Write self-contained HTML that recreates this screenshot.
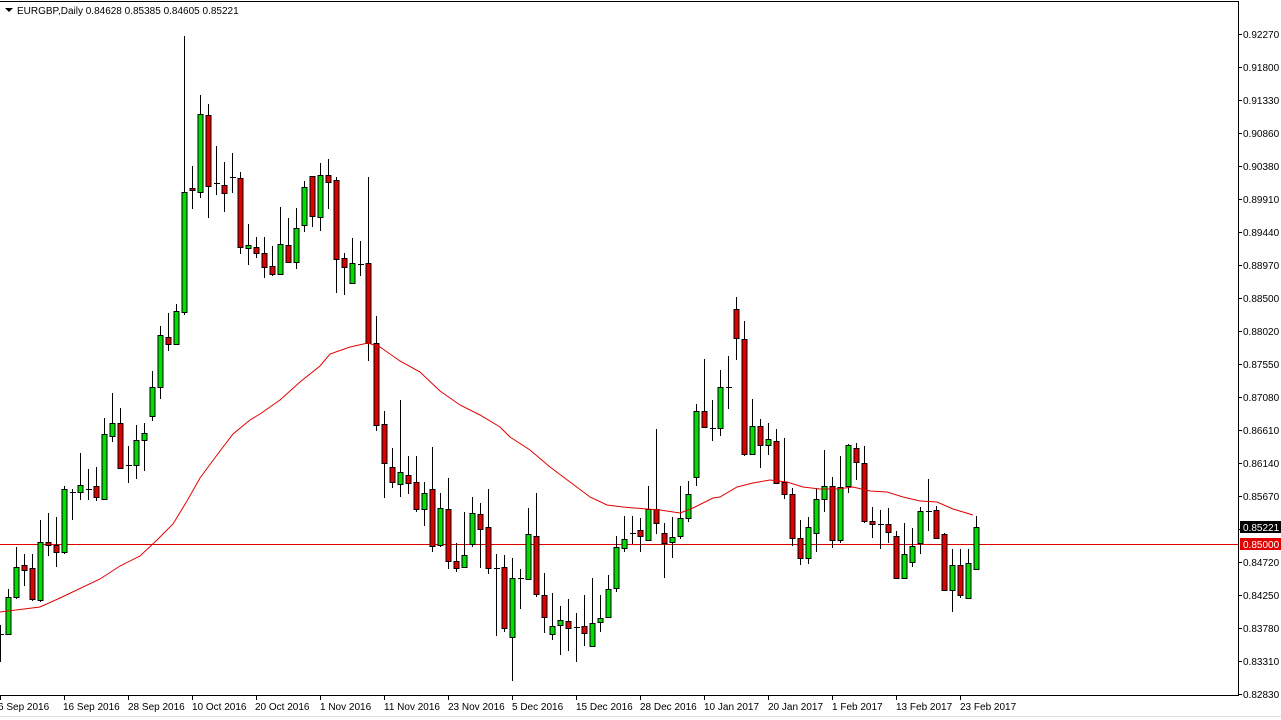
<!DOCTYPE html>
<html><head><meta charset="utf-8"><style>
html,body{margin:0;padding:0;background:#fff;width:1281px;height:720px;overflow:hidden}
svg{display:block}
text{font-family:"Liberation Sans",sans-serif;font-size:10px;fill:#000}
</style></head><body>
<svg id="c" width="1281" height="720" xmlns="http://www.w3.org/2000/svg">
<rect x="0" y="0" width="1281" height="720" fill="#fff"/>
<line x1="0" y1="1.5" x2="1238" y2="1.5" stroke="#000"/>
<line x1="1238.5" y1="1" x2="1238.5" y2="696" stroke="#000"/>
<line x1="0" y1="695.5" x2="1238" y2="695.5" stroke="#000"/>
<line x1="0" y1="716.5" x2="1281" y2="716.5" stroke="#ddd"/>
<line x1="0" y1="544.5" x2="1238" y2="544.5" stroke="#e00000"/>
<g id="cd"></g>
<polyline fill="none" stroke="#e00000" stroke-width="1" points="0,612 40,607 60,598 100,579 120,566 140,556 157,540 173,524 187,501 200,478 217,455 233,434 250,420 260,414 280,400 300,382 320,366 330,354 350,347 368,343 380,347 400,361 420,372 440,391 460,405 480,415 500,427 510,437 530,450 550,467 570,482 590,497 607,505 623,507 647,509 660,510 680,513 693,508 713,498 720,497 737,487 753,483 770,480 787,482 803,487 820,489 837,489 853,487 870,491 887,492 903,497 920,501 937,502 953,509 973,515"/>
<polygon points="5,8 13,8 9,12" fill="#000"/>
<text x="17" y="14">EURGBP,Daily  0.84628 0.85385 0.84605 0.85221</text>
<g id="ax"></g>
<rect x="1240" y="521" width="41" height="12" fill="#000"/>
<text x="1243" y="531" style="fill:#fff">0.85221</text>
<rect x="1240" y="538" width="41" height="12" fill="#e00000"/>
<text x="1243" y="548" style="fill:#fff">0.85000</text>
<text x="1243" y="38">0.92270</text><text x="1243" y="71">0.91800</text><text x="1243" y="104">0.91330</text>
<text x="1243" y="137">0.90860</text><text x="1243" y="170">0.90380</text><text x="1243" y="203">0.89910</text>
<text x="1243" y="236">0.89440</text><text x="1243" y="269">0.88970</text><text x="1243" y="302">0.88500</text>
<text x="1243" y="335">0.88020</text><text x="1243" y="368">0.87550</text><text x="1243" y="401">0.87080</text>
<text x="1243" y="434">0.86610</text><text x="1243" y="467">0.86140</text><text x="1243" y="500">0.85670</text>
<text x="1243" y="566">0.84720</text><text x="1243" y="599">0.84250</text><text x="1243" y="632">0.83780</text>
<text x="1243" y="665">0.83310</text><text x="1243" y="698">0.82830</text>
<text x="-2" y="710">6 Sep 2016</text><text x="63" y="710">16 Sep 2016</text><text x="128" y="710">28 Sep 2016</text>
<text x="192" y="710">10 Oct 2016</text><text x="255" y="710">20 Oct 2016</text><text x="320" y="710">1 Nov 2016</text>
<text x="384" y="710">11 Nov 2016</text><text x="448" y="710">23 Nov 2016</text><text x="512" y="710">5 Dec 2016</text>
<text x="576" y="710">15 Dec 2016</text><text x="640" y="710">28 Dec 2016</text><text x="704" y="710">10 Jan 2017</text>
<text x="768" y="710">20 Jan 2017</text><text x="832" y="710">1 Feb 2017</text><text x="896" y="710">13 Feb 2017</text>
<text x="960" y="710">23 Feb 2017</text>
</svg>
<script>
var D=[[634,634,625,662,'d'],[597,634,589,634,'g'],[567,597,547,599,'g'],[565,570,554,586,'r'],[568,599,554,601,'r'],[542,600,520,602,'g'],[542,545,513,556,'r'],[545,552,517,567,'r'],[489,552,486,554,'g'],[492,492,489,520,'d'],[485,492,453,500,'g'],[489,489,469,500,'d'],[486,497,467,501,'r'],[434,499,418,500,'g'],[423,436,393,442,'g'],[423,468,408,469,'r'],[465,465,446,483,'d'],[440,465,425,479,'g'],[433,440,423,471,'g'],[387,416,371,421,'g'],[335,387,326,399,'g'],[337,344,313,351,'r'],[311,344,304,345,'g'],[192,312,36,315,'g'],[188,190,166,209,'r'],[114,192,95,198,'g'],[115,186,104,218,'r'],[183,183,146,195,'d'],[185,193,162,212,'r'],[177,177,153,193,'d'],[178,247,172,254,'r'],[245,248,224,265,'g'],[247,253,237,258,'r'],[253,267,237,278,'r'],[266,274,246,276,'r'],[244,274,207,275,'g'],[245,262,218,262,'r'],[228,262,208,269,'g'],[187,225,181,232,'g'],[176,216,176,227,'r'],[175,217,163,231,'g'],[175,182,159,209,'r'],[180,259,177,293,'r'],[258,267,253,295,'r'],[263,283,238,284,'g'],[264,264,241,276,'d'],[263,343,177,361,'r'],[343,425,316,431,'r'],[424,463,411,498,'r'],[467,482,448,488,'r'],[472,484,400,497,'g'],[475,483,456,494,'r'],[482,509,456,512,'r'],[493,509,482,526,'g'],[489,546,447,552,'r'],[508,545,493,547,'g'],[509,561,478,569,'r'],[561,568,543,572,'r'],[555,567,512,568,'g'],[513,544,497,547,'g'],[514,529,503,568,'r'],[527,568,489,574,'r'],[568,568,554,636,'d'],[567,628,555,632,'r'],[578,637,558,681,'g'],[578,578,569,609,'d'],[534,579,508,580,'g'],[536,594,493,597,'r'],[595,617,573,633,'r'],[626,634,593,640,'g'],[620,625,606,655,'g'],[621,628,599,651,'r'],[627,627,613,662,'d'],[626,633,595,646,'r'],[623,646,578,646,'g'],[618,622,595,632,'g'],[589,617,575,618,'g'],[547,588,536,592,'g'],[539,548,516,552,'g'],[533,533,516,544,'d'],[530,536,518,552,'r'],[509,540,486,540,'g'],[509,523,429,534,'r'],[533,543,523,578,'r'],[537,542,517,558,'g'],[518,536,486,539,'g'],[494,518,481,522,'g'],[411,477,404,486,'g'],[411,427,359,428,'r'],[428,428,400,441,'d'],[387,428,370,436,'g'],[387,387,356,409,'d'],[309,338,297,360,'r'],[339,454,321,456,'r'],[426,454,399,454,'g'],[426,445,419,468,'r'],[439,445,423,455,'g'],[441,483,429,484,'r'],[482,494,438,499,'r'],[494,538,488,546,'r'],[538,558,520,565,'r'],[527,558,517,564,'g'],[499,533,488,552,'g'],[486,499,450,512,'g'],[486,540,477,548,'r'],[487,540,456,543,'g'],[445,486,444,493,'g'],[448,462,443,480,'r'],[463,521,446,523,'r'],[521,524,507,538,'r'],[524,524,510,549,'d'],[524,532,508,543,'r'],[536,578,531,578,'r'],[554,578,523,578,'g'],[546,562,528,567,'g'],[511,543,507,554,'g'],[511,511,479,531,'d'],[510,538,506,538,'r'],[534,590,533,590,'r'],[565,590,549,612,'g'],[565,595,549,598,'r'],[563,598,549,598,'g'],[527,569,516,570,'g']];
var s='';
D.forEach(function(d,i){var x=8*i;
s+='<line x1="'+(x+0.5)+'" y1="'+d[2]+'" x2="'+(x+0.5)+'" y2="'+d[3]+'" stroke="#000"/>';
if(d[4]=='d'||d[1]-d[0]<2){s+='<rect x="'+(x-2)+'" y="'+d[0]+'" width="6" height="'+Math.max(1,d[1]-d[0])+'" fill="'+(d[4]=='d'?'#000':(d[4]=='g'?'#00e000':'#e00000'))+'"/>';}
else s+='<rect x="'+(x-2)+'" y="'+(d[0]+0.5)+'" width="5" height="'+(d[1]-d[0])+'" fill="'+(d[4]=='g'?'#00e000':'#e00000')+'" stroke="#000"/>';});
document.getElementById('cd').innerHTML=s;
var a='';for(var k=0;k<=20;k++){var y=34.5+k*33;a+='<line x1="1238" y1="'+y+'" x2="1242" y2="'+y+'" stroke="#000"/>';}
var dx=[0,64,128,192,256,320,384,448,512,576,640,704,768,832,896,960];
dx.forEach(function(x){a+='<line x1="'+(x+0.5)+'" y1="695" x2="'+(x+0.5)+'" y2="700" stroke="#000"/>';});
document.getElementById('ax').innerHTML=a;
</script>
</body></html>
